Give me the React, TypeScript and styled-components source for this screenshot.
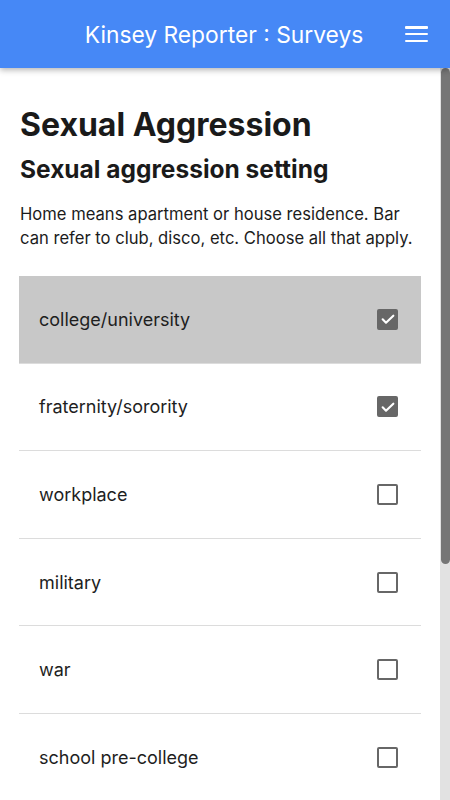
import React, { useState } from "react";
import styled, { createGlobalStyle } from "styled-components";

const Global = createGlobalStyle`
  html, body { margin: 0; padding: 0; height: 100%; overflow: hidden; background: #fff; }
  #root { height: 100%; }
  * { box-sizing: border-box; }
`;

const Page = styled.div`
  height: 800px;
  width: 450px;
  display: flex;
  flex-direction: column;
  font-family: Inter, "Liberation Sans", sans-serif;
  color: #1c1c1c;
`;

const Header = styled.header`
  height: 68px;
  flex: 0 0 68px;
  background: #4688f6;
  display: flex;
  align-items: center;
  justify-content: center;
  position: relative;
  z-index: 2;
  box-shadow: 0 2px 6px rgba(0, 0, 0, 0.3);
`;

const Title = styled.h1`
  margin: 0 0 0 -2px;
  font-size: 22.8px;
  font-weight: 400;
  color: #fff;
`;

const MenuButton = styled.button`
  position: absolute;
  right: 22px;
  top: 26px;
  width: 23px;
  height: 16px;
  padding: 0;
  border: none;
  background: transparent;
  display: flex;
  flex-direction: column;
  justify-content: space-between;
  align-items: stretch;
`;

const MenuLine = styled.span`
  display: block;
  height: 2.5px;
  background: #fff;
  border-radius: 1px;
`;

const Body = styled.div`
  flex: 1;
  display: flex;
  min-height: 0;
`;

const Scroll = styled.main`
  flex: 1;
  overflow: hidden;
  background: #fff;
`;

const Track = styled.div`
  flex: 0 0 10px;
  background: #e2e2e2;
  padding: 0 0 0 1px;
`;

const Thumb = styled.div`
  height: 496px;
  background: #767676;
  border-radius: 5px;
`;

const Content = styled.div`
  padding: 38px 19px 0 19px;
`;

const Heading = styled.h2`
  margin: 0 0 0 1px;
  font-size: 32px;
  line-height: 38px;
  font-weight: 700;
  color: #1a1a1a;
`;

const SubHeading = styled.h3`
  margin: 9px 0 0 1px;
  font-size: 24.5px;
  line-height: 32px;
  font-weight: 700;
  color: #1a1a1a;
`;

const Description = styled.p`
  margin: 17px 0 0 1px;
  font-size: 16.6px;
  line-height: 24px;
  color: #1c1c1c;
`;

const List = styled.ul`
  list-style: none;
  margin: 26px 0 0 0;
  padding: 0;
`;

const Row = styled.li<{ $active?: boolean }>`
  height: 87.6px;
  display: flex;
  align-items: center;
  justify-content: space-between;
  padding: 0 23px 0 20px;
  background: ${(p) => (p.$active ? "#c8c8c8" : "#fff")};
  border-bottom: 1px solid #dcdcdc;
  font-size: 18px;
  color: #1e1e1e;
`;

const Box = styled.span<{ $checked?: boolean }>`
  width: 21px;
  height: 21px;
  border: 2px solid #676767;
  border-radius: 2px;
  background: ${(p) => (p.$checked ? "#676767" : "transparent")};
  display: flex;
  align-items: center;
  justify-content: center;
`;

const items = [
  { label: "college/university", checked: true },
  { label: "fraternity/sorority", checked: true },
  { label: "workplace", checked: false },
  { label: "military", checked: false },
  { label: "war", checked: false },
  { label: "school pre-college", checked: false },
];

export default function App() {
  const [active] = useState(0);
  return (
    <>
      <Global />
      <Page>
        <Header>
          <Title>Kinsey Reporter : Surveys</Title>
          <MenuButton aria-label="menu">
            <MenuLine />
            <MenuLine />
            <MenuLine />
          </MenuButton>
        </Header>
        <Body>
          <Scroll>
            <Content>
              <Heading>Sexual Aggression</Heading>
              <SubHeading>Sexual aggression setting</SubHeading>
              <Description>
                Home means apartment or house residence. Bar can refer to club, disco, etc. Choose all that apply.
              </Description>
              <List>
                {items.map((it, i) => (
                  <Row key={it.label} $active={i === active}>
                    <span>{it.label}</span>
                    <Box $checked={it.checked}>
                      {it.checked && (
                        <svg width="16" height="16" viewBox="0 0 24 24">
                          <path d="M4 12.5l5 5L20 7" fill="none" stroke="#fff" strokeWidth="3.2" strokeLinecap="round" strokeLinejoin="round" />
                        </svg>
                      )}
                    </Box>
                  </Row>
                ))}
              </List>
            </Content>
          </Scroll>
          <Track>
            <Thumb />
          </Track>
        </Body>
      </Page>
    </>
  );
}
